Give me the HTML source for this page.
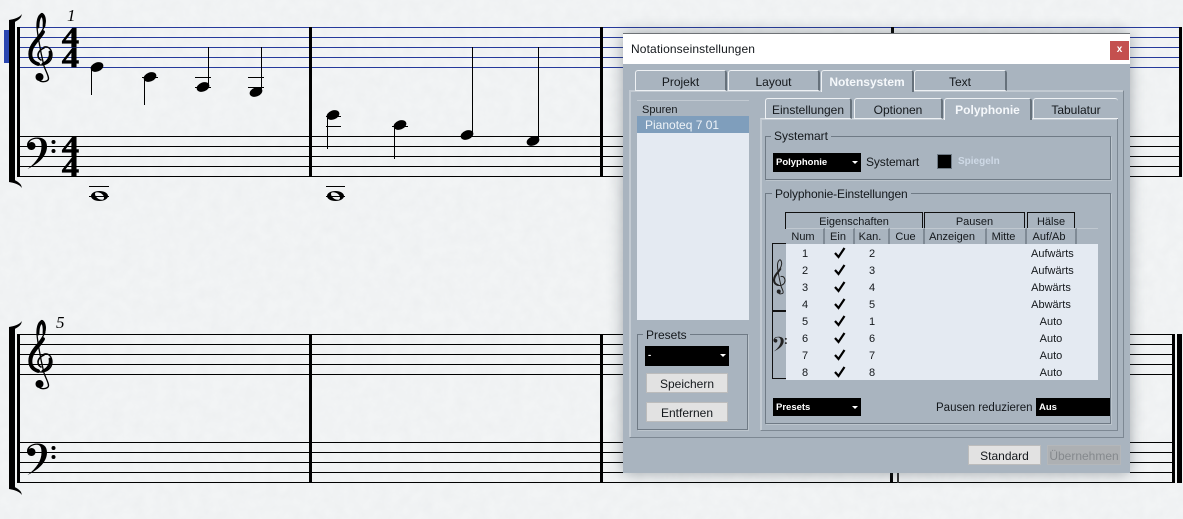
<!DOCTYPE html>
<html lang="de">
<head>
<meta charset="utf-8">
<title>Notationseinstellungen</title>
<style>
html,body{margin:0;padding:0;width:1183px;height:519px;overflow:hidden;background:#f0f2f4}
*{box-sizing:border-box}
#score{position:absolute;left:0;top:0}
#dlg{position:absolute;left:623px;top:33px;width:507px;height:440px;background:#a9b4bf;box-shadow:0 0 14px rgba(60,70,80,.45);font:12px "Liberation Sans",sans-serif;color:#14181c}
.a{position:absolute}
.t{position:absolute;white-space:nowrap;line-height:14px}
.title{left:0;top:0;width:507px;height:31px;background:#fff;border-top:1px solid #6e7276}
.close{left:487px;top:8px;width:19px;height:19px;background:#c4504f;color:#fff;font:bold 10px/18px "Liberation Sans",sans-serif;text-align:center}
.tab{position:absolute;height:21px;border-top:1px solid #eef1f4;border-left:1px solid #eef1f4;border-right:2px solid #66717b;border-bottom:1px solid #eef1f4;border-radius:3px 3px 0 0;text-align:center;line-height:22px;font-size:12px}
.tab.on{color:#f5f8fb;font-weight:bold;border-bottom:0;background:#a9b4bf;z-index:3;height:22px}
.frame{position:absolute;border:1px solid #7d8893;box-shadow:1px 1px 0 #c2cad2 inset}
.grp{position:absolute;border:1px solid #6f7a85;box-shadow:1px 1px 0 #bcc5cd}
.leg{position:absolute;background:#a9b4bf;padding:0 3px;line-height:14px;white-space:nowrap}
.dd{position:absolute;background:#000;color:#fff;font:bold 9.5px/19px "Liberation Sans",sans-serif;padding-left:3px}
.dd.ar:after{content:"";position:absolute;right:3px;top:8px;border:3px solid transparent;border-top:3px solid #fff;border-bottom:0}
.btn{position:absolute;background:#e2e2e2;border:1px solid #bcbcbc;text-align:center;line-height:20px}
.gh{position:absolute;top:179px;height:17px;border:1px solid #101010;border-bottom:0;text-align:center;line-height:18px;font-size:11px}
.ch{position:absolute;top:195px;height:16px;border-top:1px solid #c0c8d0;border-right:2px solid #7f8a95;text-align:center;line-height:17px;font-size:11px}
.cell{position:absolute;width:40px;text-align:center;font-size:11px;line-height:14px;margin-top:1px;margin-left:-1px}
</style>
</head>
<body>
<svg id="score" width="1183" height="519" viewBox="0 0 1183 519" xmlns="http://www.w3.org/2000/svg">
<filter id="paper" x="0" y="0" width="100%" height="100%"><feTurbulence type="fractalNoise" baseFrequency="0.09" numOctaves="3" seed="4"/><feColorMatrix values="0 0 0 0 .5  0 0 0 0 .52  0 0 0 0 .55  .12 0 0 0 -.03"/></filter>
<rect width="1183" height="519" fill="#f2f4f5"/>
<rect width="1183" height="519" filter="url(#paper)"/>

<rect x="4" y="30" width="5" height="33" fill="#2a46b0"/>

<g stroke="#25399b" stroke-width="1">
<path d="M18 27.5H1180M18 37.5H1180M18 47.5H1180M18 57.5H1180M18 67.5H1180"/>
</g>
<g stroke="#000" stroke-width="1">
<path d="M18 136.5H1180M18 146.5H1180M18 156.5H1180M18 166.5H1180M18 176.5H1180"/>
<path d="M18 334.5H1175M18 344.5H1175M18 354.5H1175M18 364.5H1175M18 374.5H1175"/>
<path d="M18 442.5H1175M18 452.5H1175M18 462.5H1175M18 472.5H1175M18 482.5H1175"/>
</g>

<g fill="#000">
<rect x="17" y="27" width="3" height="150"/>
<rect x="309" y="27" width="3" height="150"/>
<rect x="600" y="27" width="3" height="150"/>
<rect x="891" y="27" width="3" height="150"/>
<rect x="1179" y="27" width="3" height="150"/>
<rect x="17" y="334" width="3" height="149"/>
<rect x="309" y="334" width="3" height="149"/>
<rect x="600" y="334" width="3" height="149"/>
<rect x="890" y="334" width="3" height="149"/>
<rect x="897" y="334" width="2" height="149" fill="#333"/>
<rect x="1172" y="334" width="3" height="149"/>
<rect x="1177" y="334" width="5" height="149"/>
<rect x="9" y="20" width="6" height="162"/>
<path d="M9 20C14 19 19 18 22 14L21 17C19 20 15 22 12 23H9Z"/>
<path d="M9 182C14 183 19 184 22 188L21 185C19 182 15 180 12 179H9Z"/>
<rect x="9" y="327" width="6" height="162"/>
<path d="M9 327C14 326 19 325 22 321L21 324C19 327 15 329 12 330H9Z"/>
<path d="M9 489C14 490 19 491 22 495L21 492C19 489 15 487 12 486H9Z"/>
</g>

<g fill="none" stroke="#000" stroke-linecap="round">
<path d="M44 47C49 46 52 50 52 55C52 61 47 65 41 65C33 65 29 60 29 54C29 44 38 38 42 31C45 26 46 22 45 18C44 14 42 13 41 14C38 16 37 21 37 26C37 31 40 50 44 66C46 72 50 78 48 80C46 82 42 82 40 81" stroke-width="1.300"/>
<path d="M38 64C32 62 30 58 30.500 53C31 45 39 39 43 32" stroke-width="3.800"/>
<path d="M44 26C44.500 22 44 16 41.500 15.500C39 17 38 22 38 27" stroke-width="2.800"/>
<path d="M44 48C41 49 38 52 38 55C38 57 39 59 41 60" stroke-width="1.600"/>
<path d="M50 52C51 57 48 62 43 64" stroke-width="2.800"/>
</g>
<circle cx="39.500" cy="77" r="4" fill="#000"/>

<g transform="translate(0,307)">
<g fill="none" stroke="#000" stroke-linecap="round">
<path d="M44 47C49 46 52 50 52 55C52 61 47 65 41 65C33 65 29 60 29 54C29 44 38 38 42 31C45 26 46 22 45 18C44 14 42 13 41 14C38 16 37 21 37 26C37 31 40 50 44 66C46 72 50 78 48 80C46 82 42 82 40 81" stroke-width="1.300"/>
<path d="M38 64C32 62 30 58 30.500 53C31 45 39 39 43 32" stroke-width="3.800"/>
<path d="M44 26C44.500 22 44 16 41.500 15.500C39 17 38 22 38 27" stroke-width="2.800"/>
<path d="M44 48C41 49 38 52 38 55C38 57 39 59 41 60" stroke-width="1.600"/>
<path d="M50 52C51 57 48 62 43 64" stroke-width="2.800"/>
</g>
<circle cx="39.500" cy="77" r="4" fill="#000"/>
</g>

<g fill="#000">
<path d="M27.500 169C40 163 47 155 47 146.500C47 140 43 137.500 37.500 137.500C31 137.500 27 141 27 145C27 148 29 150 31.500 150C34 150 35.500 148 35.500 146C35.500 144 34 142 31.500 142C30.500 142 29.500 142.500 29 143.500C30 140.500 33 138.800 36.500 138.800C40 138.800 41.500 141 41.500 146.500C41.500 154 37 162 27.500 169Z"/>
<circle cx="53.500" cy="142" r="2"/><circle cx="53.500" cy="151" r="2"/>
<g transform="translate(0,306)">
<path d="M27.500 169C40 163 47 155 47 146.500C47 140 43 137.500 37.500 137.500C31 137.500 27 141 27 145C27 148 29 150 31.500 150C34 150 35.500 148 35.500 146C35.500 144 34 142 31.500 142C30.500 142 29.500 142.500 29 143.500C30 140.500 33 138.800 36.500 138.800C40 138.800 41.500 141 41.500 146.500C41.500 154 37 162 27.500 169Z"/>
<circle cx="53.500" cy="142" r="2"/><circle cx="53.500" cy="151" r="2"/>
</g>
</g>

<g font-family="Liberation Serif, serif" font-weight="bold" font-size="29" fill="#000" stroke="#000" stroke-width=".5" text-anchor="middle">
<text transform="translate(70.500,47) scale(1.200,1)">4</text>
<text transform="translate(70.500,67) scale(1.200,1)">4</text>
<text transform="translate(70.500,156) scale(1.200,1)">4</text>
<text transform="translate(70.500,176) scale(1.200,1)">4</text>
</g>

<g font-family="Liberation Serif, serif" font-style="italic" font-size="17" fill="#000">
<text x="67" y="21">1</text>
<text x="56" y="328">5</text>
</g>

<g stroke="#000" stroke-width="1" fill="none">
<path d="M91.500 67V95M144.500 77V105M208.500 47V87M261.500 47V92M327.500 116V149M394.500 126V159M472.500 47V135M538.500 47V141"/>
<path d="M142 77.500H158M195 77.500H211M195 87.500H211M248 77.500H264M248 87.500H264M326 116.500H341M326 126.500H341M392 126.500H408"/>
<path d="M89 186.500H109M89 196.500H109M326 186.500H345M326 196.500H345"/>
</g>
<g fill="#000">
<ellipse cx="97" cy="67" rx="6.600" ry="4.500" transform="rotate(-22 97 67)"/>
<ellipse cx="150" cy="77" rx="6.600" ry="4.500" transform="rotate(-22 150 77)"/>
<ellipse cx="203" cy="87" rx="6.600" ry="4.500" transform="rotate(-22 203 87)"/>
<ellipse cx="256" cy="92" rx="6.600" ry="4.500" transform="rotate(-22 256 92)"/>
<ellipse cx="333" cy="115" rx="6.600" ry="4.500" transform="rotate(-22 333 115)"/>
<ellipse cx="400" cy="125" rx="6.600" ry="4.500" transform="rotate(-22 400 125)"/>
<ellipse cx="467" cy="135" rx="6.600" ry="4.500" transform="rotate(-22 467 135)"/>
<ellipse cx="533" cy="141" rx="6.600" ry="4.500" transform="rotate(-22 533 141)"/>
<path fill-rule="evenodd" d="M91 196C91 193 95 191 99.500 191C104 191 108 193 108 196C108 199 104 201 99.500 201C95 201 91 199 91 196ZM95 193.800C95 196.500 98 199.800 102 199.800C103.500 199.800 104 198.500 104 197.700C104 195 101 192.200 97 192.200C95.800 192.200 95 192.800 95 193.800Z"/>
<path fill-rule="evenodd" d="M327 196C327 193 331 191 335.500 191C340 191 344 193 344 196C344 199 340 201 335.500 201C331 201 327 199 327 196ZM331 193.800C331 196.500 334 199.800 338 199.800C339.500 199.800 340 198.500 340 197.700C340 195 337 192.200 333 192.200C331.800 192.200 331 192.800 331 193.800Z"/>
</g>
</svg>

<div id="dlg">
<div class="a title"></div>
<div class="t" style="left:8px;top:9px;font-size:12px;letter-spacing:.12px">Notationseinstellungen</div>
<div class="a close">x</div>

<div class="frame" style="left:6px;top:57px;width:495px;height:348px;border-left-color:#c2cad2;border-top-color:#c2cad2"></div>
<div class="tab" style="left:12px;top:37px;width:92px">Projekt</div>
<div class="tab" style="left:105px;top:37px;width:92px">Layout</div>
<div class="tab on" style="left:198px;top:37px;width:93px">Notensystem</div>
<div class="tab" style="left:291px;top:37px;width:93px">Text</div>

<div class="a" style="left:14px;top:67px;width:112px;height:1px;background:#c2cad2"></div>
<div class="t" style="left:19px;top:70px;font-size:11px">Spuren</div>
<div class="a" style="left:14px;top:83px;width:112px;height:17px;background:#7f9ebc;color:#eef3f8;padding-left:8px;line-height:18px">Pianoteq 7 01</div>
<div class="a" style="left:14px;top:100px;width:112px;height:187px;background:#e4eaf2"></div>

<div class="grp" style="left:14px;top:301px;width:111px;height:96px"></div>
<div class="leg" style="left:20px;top:295px">Presets</div>
<div class="dd ar" style="left:22px;top:313px;width:84px;height:20px;line-height:20px">-</div>
<div class="btn" style="left:23px;top:340px;width:82px;height:20px">Speichern</div>
<div class="btn" style="left:23px;top:369px;width:82px;height:20px">Entfernen</div>

<div class="frame" style="left:137px;top:85px;width:358px;height:313px;border-top:1px solid #d3d9df;border-left-color:#c2cad2"></div>
<div class="tab" style="left:142px;top:65px;width:87px">Einstellungen</div>
<div class="tab" style="left:231px;top:65px;width:89px">Optionen</div>
<div class="tab on" style="left:321px;top:65px;width:88px">Polyphonie</div>
<div class="tab" style="left:410px;top:65px;width:85px;border-right:0">Tabulatur</div>

<div class="grp" style="left:142px;top:103px;width:346px;height:44px"></div>
<div class="leg" style="left:148px;top:96px">Systemart</div>
<div class="dd ar" style="left:150px;top:120px;width:88px;height:19px">Polyphonie</div>
<div class="t" style="left:243px;top:122px;letter-spacing:-.1px">Systemart</div>
<div class="a" style="left:315px;top:122px;width:13px;height:13px;background:#000;box-shadow:0 0 0 1px #6f7a85"></div>
<div class="t" style="left:335px;top:122px;font:bold 10px/14px 'Liberation Sans',sans-serif;color:#ced9e6">Spiegeln</div>

<div class="grp" style="left:142px;top:160px;width:346px;height:231px"></div>
<div class="leg" style="left:149px;top:154px;letter-spacing:-.12px">Polyphonie-Einstellungen</div>

<div class="gh" style="left:162px;width:138px">Eigenschaften</div>
<div class="gh" style="left:301px;width:101px">Pausen</div>
<div class="gh" style="left:404px;width:48px">Hälse</div>

<div class="ch" style="left:163px;width:39px;padding-right:3px">Num</div>
<div class="ch" style="left:202px;width:30px;padding-right:2px">Ein</div>
<div class="ch" style="left:232px;width:35px;padding-right:3px">Kan.</div>
<div class="ch" style="left:267px;width:35px;padding-right:2px">Cue</div>
<div class="ch" style="left:302px;width:62px;padding-right:6px">Anzeigen</div>
<div class="ch" style="left:364px;width:40px;padding-right:5px">Mitte</div>
<div class="ch" style="left:404px;width:50px;padding-right:4px">Auf/Ab</div>
<div class="ch" style="left:454px;width:21px;border-right:0"></div>

<div class="a" style="left:163px;top:211px;width:312px;height:136px;background:#e4eaf2"></div>

<div class="a" style="left:149px;top:210px;width:14px;height:68px;border:1px solid #111;border-right:0"></div>
<div class="a" style="left:149px;top:278px;width:14px;height:68px;border:1px solid #111;border-right:0"></div>
<svg class="a" style="left:149px;top:225px" width="14" height="38" viewBox="26 10 28 76">
<g fill="none" stroke="#222" stroke-linecap="round">
<path d="M44 47C49 46 52 50 52 55C52 61 47 65 41 65C33 65 29 60 29 54C29 44 38 38 42 31C45 26 46 22 45 18C44 14 42 13 41 14C38 16 37 21 37 26C37 31 40 50 44 66C46 72 50 78 48 80C46 82 42 82 40 81" stroke-width="2"/>
<path d="M38 64C32 62 30 58 30.500 53C31 45 39 39 43 32" stroke-width="3.400"/>
</g><circle cx="39.500" cy="77" r="4" fill="#222"/></svg>
<svg class="a" style="left:150px;top:301px" width="14" height="20" viewBox="26 135 30 36">
<g fill="#222"><path d="M27.500 169C41 163 49 155 49 146.500C49 140 44 137.500 37.500 137.500C31 137.500 27 141 27 145C27 148 29 150 31.500 150C34 150 35.500 148 35.500 146C35.500 144 34 142 31.500 142C30.500 142 29.500 142.500 29 143.500C30 140.500 33 138.800 36.500 138.800C40.500 138.800 42.500 141 42.500 146.500C42.500 154 37 162 27.500 169Z"/><circle cx="53.500" cy="142" r="2"/><circle cx="53.500" cy="151" r="2"/></g></svg>

<div class="cell" style="left:163px;top:213px">1</div><div class="cell" style="left:230px;top:213px">2</div><div class="cell" style="left:409px;top:213px">Aufwärts</div>
<div class="cell" style="left:163px;top:230px">2</div><div class="cell" style="left:230px;top:230px">3</div><div class="cell" style="left:409px;top:230px">Aufwärts</div>
<div class="cell" style="left:163px;top:247px">3</div><div class="cell" style="left:230px;top:247px">4</div><div class="cell" style="left:409px;top:247px">Abwärts</div>
<div class="cell" style="left:163px;top:264px">4</div><div class="cell" style="left:230px;top:264px">5</div><div class="cell" style="left:409px;top:264px">Abwärts</div>
<div class="cell" style="left:163px;top:281px">5</div><div class="cell" style="left:230px;top:281px">1</div><div class="cell" style="left:409px;top:281px">Auto</div>
<div class="cell" style="left:163px;top:298px">6</div><div class="cell" style="left:230px;top:298px">6</div><div class="cell" style="left:409px;top:298px">Auto</div>
<div class="cell" style="left:163px;top:315px">7</div><div class="cell" style="left:230px;top:315px">7</div><div class="cell" style="left:409px;top:315px">Auto</div>
<div class="cell" style="left:163px;top:332px">8</div><div class="cell" style="left:230px;top:332px">8</div><div class="cell" style="left:409px;top:332px">Auto</div>
<svg class="a" style="left:210px;top:212px" width="14" height="140" viewBox="0 0 14 140" fill="none" stroke="#000" stroke-width="2.200">
<path d="M2 8L5.500 12L11.500 3"/><path d="M2 25L5.500 29L11.500 20"/><path d="M2 42L5.500 46L11.500 37"/><path d="M2 59L5.500 63L11.500 54"/><path d="M2 76L5.500 80L11.500 71"/><path d="M2 93L5.500 97L11.500 88"/><path d="M2 110L5.500 114L11.500 105"/><path d="M2 127L5.500 131L11.500 122"/>
</svg>

<div class="dd ar" style="left:150px;top:365px;width:88px;height:18px;line-height:20px">Presets</div>
<div class="t" style="left:313px;top:368px;font-size:11.500px">Pausen reduzieren</div>
<div class="dd" style="left:413px;top:365px;width:74px;height:18px;line-height:20px">Aus</div>

<div class="btn" style="left:345px;top:412px;width:73px;height:20px">Standard</div>
<div class="btn" style="left:424px;top:412px;width:74px;height:20px;background:#adb0b3;border-color:#b4b7ba;color:#85898d">Übernehmen</div>
</div>
</body>
</html>
